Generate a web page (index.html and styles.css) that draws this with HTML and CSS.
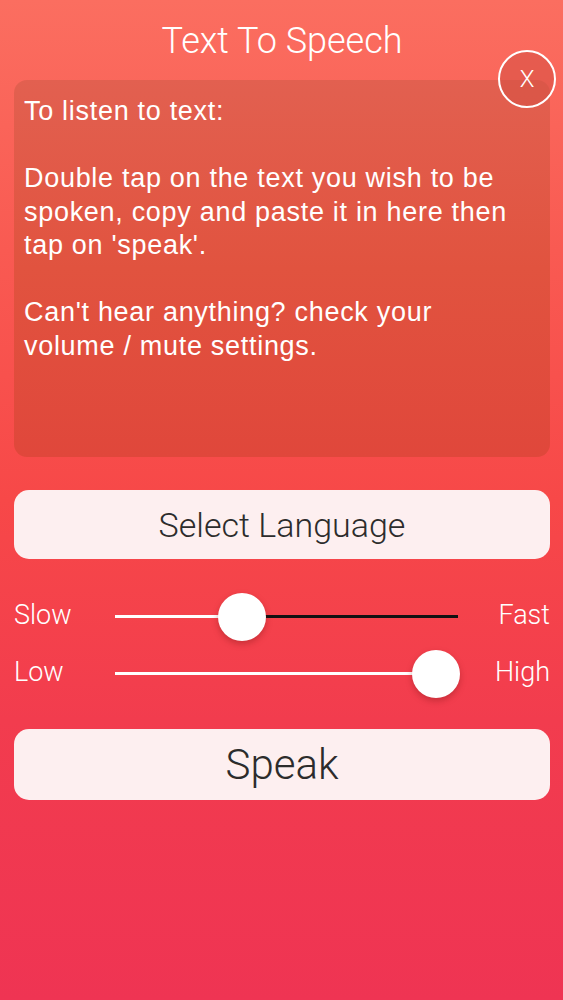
FILE: index.html
```html
<!DOCTYPE html>
<html>
<head>
<meta charset="utf-8">
<title>Text To Speech</title>
<link rel="stylesheet" href="styles.css">
</head>
<body>
<div class="screen">
  <div class="header">
    <h1 class="title">Text To Speech</h1>
    <button class="close">X</button>
  </div>

  <div class="notes">
    <p>To listen to text:</p>
    <p>Double tap on the text you wish to be spoken, copy and paste it in here then tap on 'speak'.</p>
    <p>Can't hear anything? check your volume / mute settings.</p>
  </div>

  <button class="btn btn-lang">Select Language</button>

  <div class="sliders">
    <div class="slider-row">
      <span class="lbl">Slow</span>
      <div class="track">
        <div class="fill" style="width:37%"></div>
        <div class="thumb" style="left:37%"></div>
      </div>
      <span class="lbl right">Fast</span>
    </div>
    <div class="slider-row">
      <span class="lbl">Low</span>
      <div class="track">
        <div class="fill" style="width:93.5%"></div>
        <div class="thumb" style="left:93.5%"></div>
      </div>
      <span class="lbl right">High</span>
    </div>
  </div>

  <button class="btn btn-speak">Speak</button>
</div>
</body>
</html>
```

FILE: styles.css
```css
html,body{
  margin:0;
  padding:0;
}
body{
  width:563px;
  height:1000px;
  overflow:hidden;
  background:linear-gradient(180deg,#fb6e60 0%,#f95a52 25%,#f74848 50%,#f23c4e 72%,#ef3453 100%);
  font-family:"Liberation Sans",Arial,sans-serif;
  color:#fff;
}
.screen{
  padding:0 13px 0 14px;
}
.header{
  position:relative;
  height:80px;
}
.title{
  margin:0;
  padding-top:21px;
  text-align:center;
  font-family:Roboto,"Liberation Sans",sans-serif;
  font-weight:300;
  font-size:36px;
  line-height:40px;
  color:#fff;
}
.close{
  position:absolute;
  right:-6px;
  top:50px;
  width:58px;
  height:58px;
  border-radius:50%;
  border:2.5px solid #fff;
  background:rgba(214,80,68,0.55);
  color:#fff;
  font-family:Roboto,sans-serif;
  font-weight:300;
  font-size:24px;
  line-height:52px;
  padding:0;
  text-align:center;
  z-index:2;
}
.notes{
  height:377px;
  box-sizing:border-box;
  border-radius:13px;
  background:linear-gradient(180deg,#e26050 0%,#e1533f 50%,#e0473b 100%);
  padding:15px 36px 16px 10px;
  font-size:27px;
  letter-spacing:0.7px;
  line-height:33.5px;
  color:#fff;
}
.notes p{
  margin:0 0 33.5px;
}
.btn{
  display:block;
  width:100%;
  border:none;
  border-radius:15px;
  background:#fdeff0;
  color:#2c2c2c;
  font-family:Roboto,"Liberation Sans",sans-serif;
  font-weight:300;
  text-align:center;
  padding:0;
}
.btn-lang{
  margin-top:33px;
  height:69px;
  font-size:34px;
}
.sliders{
  margin-top:27px;
}
.slider-row{
  display:grid;
  grid-template-columns:101px 343px 1fr;
  align-items:center;
  height:57px;
}
.lbl{
  font-family:Roboto,"Liberation Sans",sans-serif;
  font-weight:300;
  font-size:27px;
  color:#fff;
}
.lbl.right{
  text-align:right;
}
.track{
  position:relative;
  height:3px;
  background:#111;
  margin-top:4px;
}
.fill{
  position:absolute;
  left:0;
  top:0;
  height:100%;
  background:#fff;
}
.thumb{
  position:absolute;
  top:50%;
  width:48px;
  height:48px;
  border-radius:50%;
  background:#fff;
  transform:translate(-50%,-50%);
  box-shadow:0 3px 6px rgba(120,20,20,0.35);
}
.slider-row:nth-child(2) .track{
  background:#fff;
}
.btn-speak{
  margin-top:29px;
  height:71px;
  font-size:42px;
}
```
